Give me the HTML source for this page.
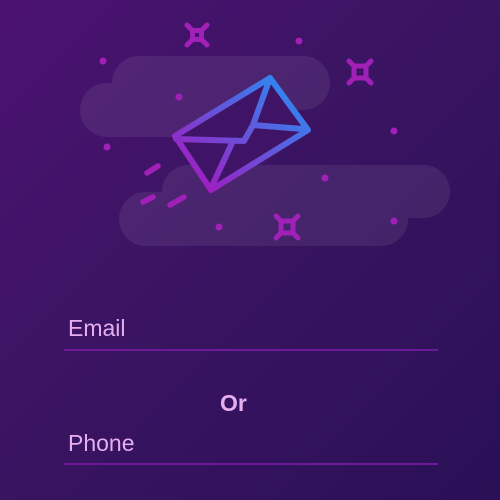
<!DOCTYPE html><html><head><style>
html,body{margin:0;padding:0}
body{width:500px;height:500px;overflow:hidden;background:linear-gradient(135deg,#4c1272 0%,#3a1462 45%,#2a1056 100%);font-family:"Liberation Sans",sans-serif;position:relative}
.t{position:absolute;color:#e6aef0;font-size:23px;line-height:1}
.l{position:absolute;left:64px;width:374px;height:2px;background:#6e1a98}
</style></head><body>
<svg width="500" height="300" style="position:absolute;left:0;top:0">
<defs><linearGradient id="g" x1="290" y1="80" x2="200" y2="190" gradientUnits="userSpaceOnUse"><stop offset="0" stop-color="#2a8cf4"/><stop offset="1" stop-color="#a21bbf"/></linearGradient></defs>
<g fill="#ffffff" opacity="0.07">
<rect x="112" y="56" width="218" height="54" rx="27"/><rect x="80" y="83" width="210" height="54" rx="27"/>
<rect x="162" y="165" width="288" height="53" rx="26.5"/><rect x="119" y="192" width="289" height="54" rx="27"/>
</g>
<g fill="#a020b8">
<circle cx="103" cy="61" r="3.5"/><circle cx="299" cy="41" r="3.5"/><circle cx="179" cy="97" r="3.5"/><circle cx="107" cy="147" r="3.5"/><circle cx="394" cy="131" r="3.5"/><circle cx="325" cy="178" r="3.5"/><circle cx="219" cy="227" r="3.5"/><circle cx="394" cy="221" r="3.5"/>
</g>
<g stroke="#a020b8" stroke-width="5.5" stroke-linecap="round" fill="none">
<line x1="147" y1="173" x2="158" y2="166"/><line x1="143" y1="202" x2="153" y2="197"/><line x1="170" y1="205" x2="184" y2="197"/>
</g>
<g stroke="#a020b8" stroke-width="5" stroke-linecap="round" fill="none">
<g transform="translate(197,35)"><rect x="-4.5" y="-4.5" width="9" height="9"/><path d="M-5-5l-5-5M5-5l5-5M-5 5l-5 5M5 5l5 5"/></g>
<g transform="translate(360,72)"><rect x="-6" y="-6" width="12" height="12"/><path d="M-6-6l-5-5M6-6l5-5M-6 6l-5 5M6 6l5 5"/></g>
<g transform="translate(287,227)"><rect x="-6" y="-6" width="12" height="12"/><path d="M-6-6l-5-5M6-6l5-5M-6 6l-5 5M6 6l5 5"/></g>
</g>
<g stroke="url(#g)" stroke-width="6" stroke-linejoin="round" stroke-linecap="round" fill="none">
<path d="M270 78 L308 130 L211 190 L175 136 Z" fill="#3f1466"/>
<path d="M176 139 L244 141 L253 125 L270 78"/>
<path d="M253 125 L303 129"/>
<path d="M233 141 L211 188"/>
</g>
</svg>
<div class="t" style="left:68px;top:317px">Email</div>
<div class="l" style="top:349px"></div>
<div class="t" style="left:220px;top:392px;font-weight:bold">Or</div>
<div class="t" style="left:68px;top:432px">Phone</div>
<div class="l" style="top:463px"></div>
</body></html>
